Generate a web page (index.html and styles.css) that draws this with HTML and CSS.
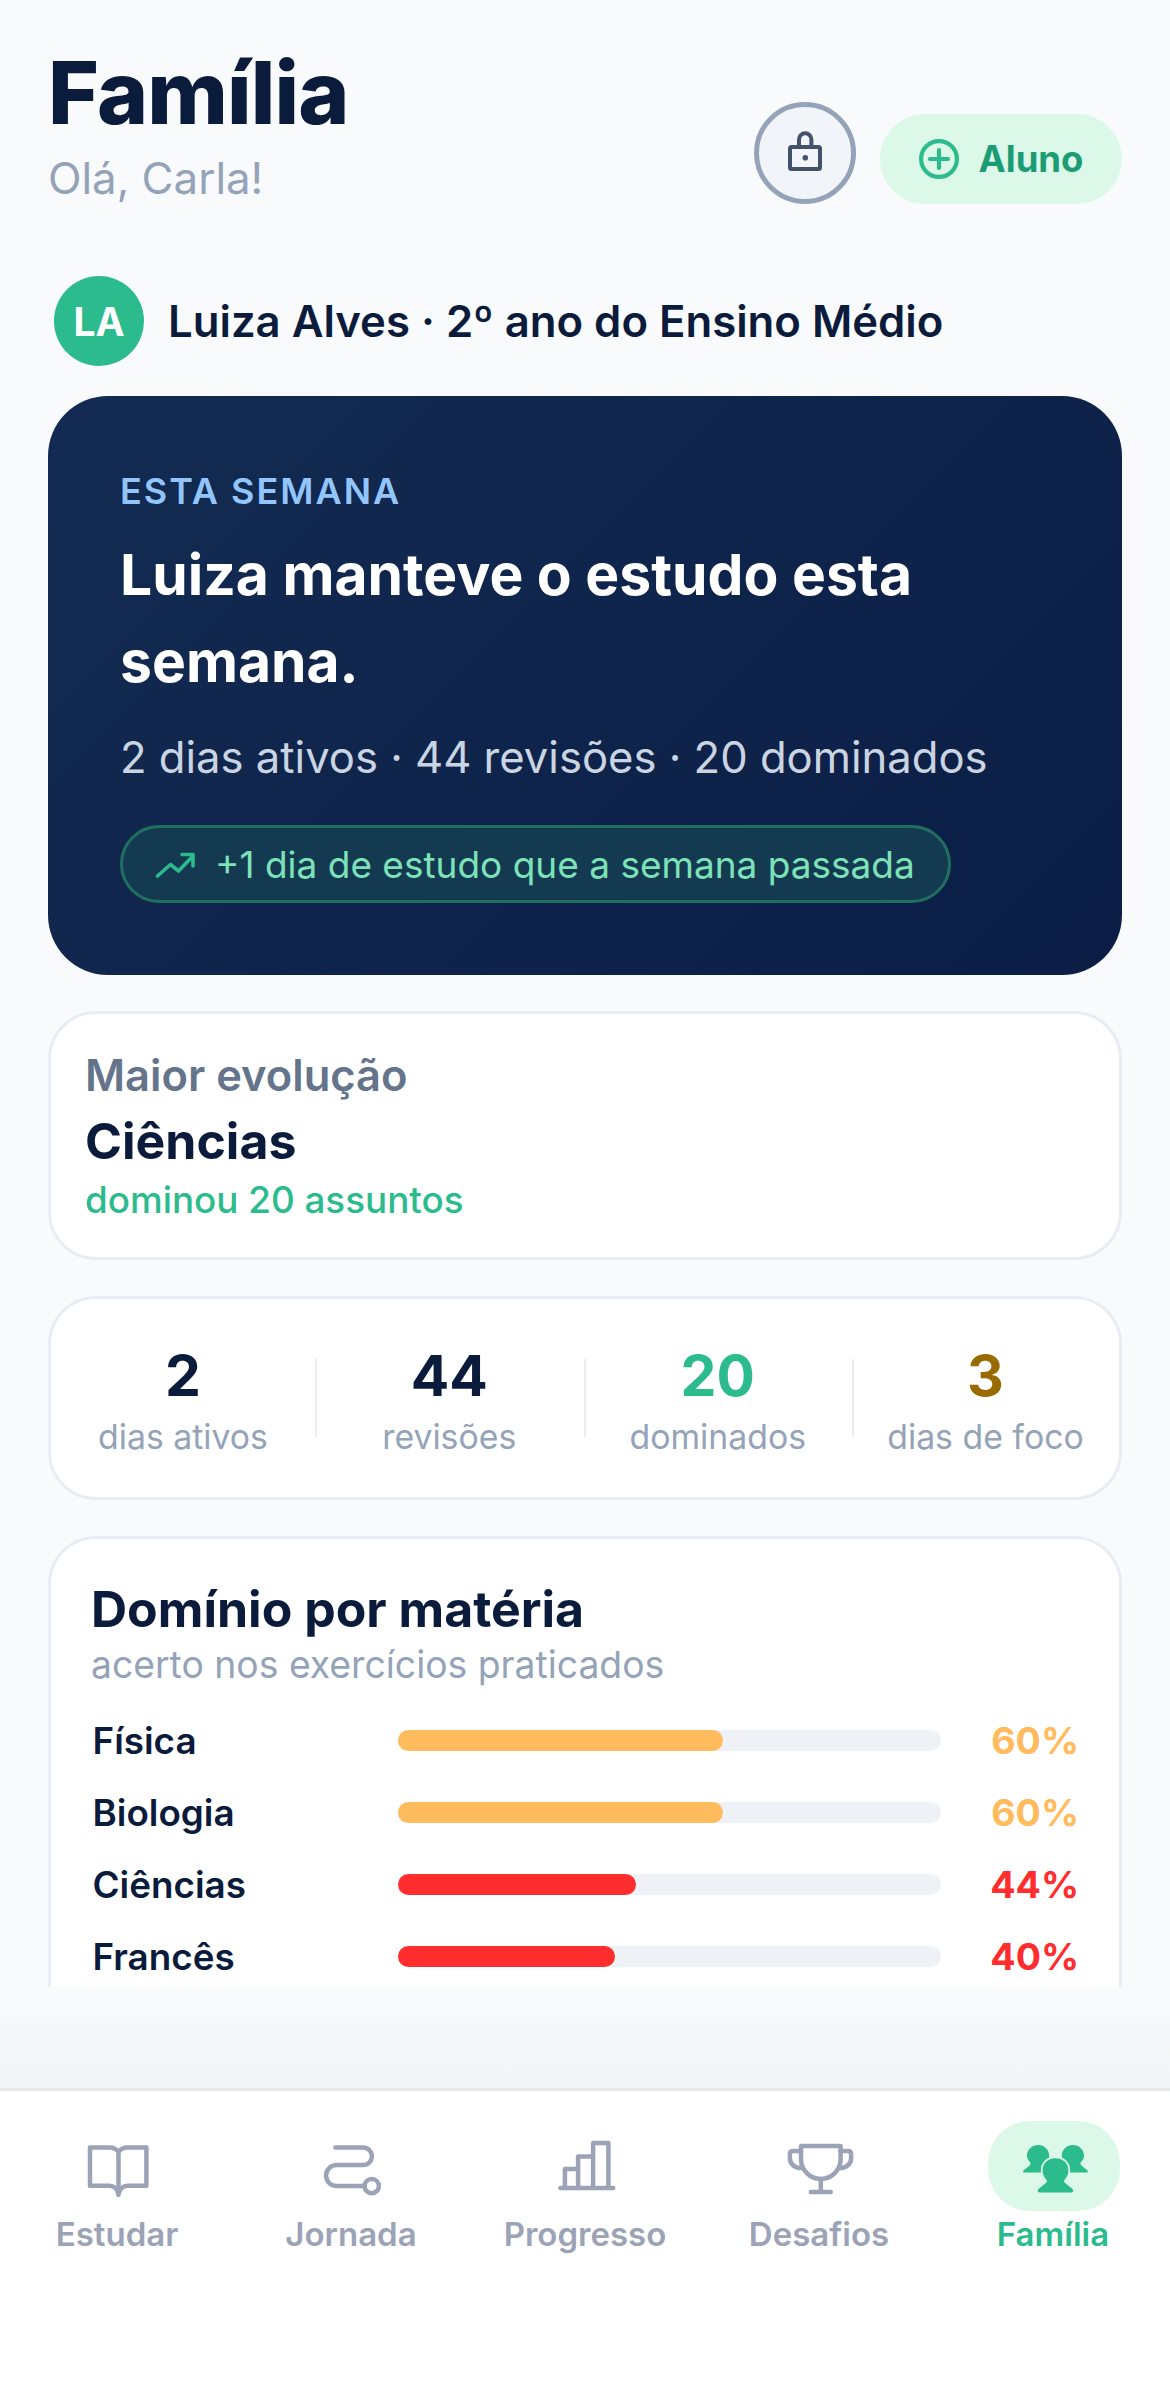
FILE: index.html
```html
<!DOCTYPE html>
<html lang="pt-BR">
<head>
    <meta charset="UTF-8">
    <title>Família</title>
    <link rel="stylesheet" href="styles.css">
</head>
<body>
<div class="app">
    <div class="scroll">
        <header class="top">
            <div class="top-text">
                <h1>Família</h1>
                <p>Olá, Carla!</p>
            </div>
            <div class="top-actions">
                <div class="lock-btn">
                    <svg width="48" height="48" viewBox="0 0 48 48" fill="none" stroke="#42526a" stroke-width="4" stroke-linejoin="round"><rect x="9" y="18" width="30" height="22" rx="1.5"/><path d="M18 17v-6.500a6.200 6.200 0 0 1 12.400 0V17"/><circle cx="24.300" cy="28.700" r="2.800" fill="#42526a" stroke="none"/></svg>
                </div>
                <div class="add-btn">
                    <svg width="40" height="40" viewBox="0 0 40 40" fill="none" stroke="#2bbb8d" stroke-width="4.200" stroke-linecap="round"><circle cx="20" cy="20" r="17.900"/><path d="M20 11v18M11 20h18"/></svg>
                    <span>Aluno</span>
                </div>
            </div>
        </header>

        <div class="student">
            <div class="avatar">LA</div>
            <div class="student-name">Luiza Alves · 2º ano do Ensino Médio</div>
        </div>

        <section class="hero">
            <div class="hero-label">ESTA SEMANA</div>
            <h2>Luiza manteve o estudo esta semana.</h2>
            <p class="hero-sub">2 dias ativos · 44 revisões · 20 dominados</p>
            <div class="hero-pill">
                <svg width="42" height="42" viewBox="0 0 42 42" fill="none" stroke="#2bbb8d" stroke-width="3.600" stroke-linecap="round" stroke-linejoin="round"><path d="M3.500 33l13-11.500 8 6.500L38 14"/><path d="M28 11.500h11V23"/></svg>
                <span>+1 dia de estudo que a semana passada</span>
            </div>
        </section>

        <section class="card best">
            <div class="best-label">Maior evolução</div>
            <div class="best-name">Ciências</div>
            <div class="best-note">dominou 20 assuntos</div>
        </section>

        <section class="card stats">
            <div class="stat"><b>2</b><span>dias ativos</span></div>
            <div class="stat"><b>44</b><span>revisões</span></div>
            <div class="stat"><b class="green">20</b><span>dominados</span></div>
            <div class="stat"><b class="brown">3</b><span>dias de foco</span></div>
        </section>

        <section class="card subjects">
            <h3>Domínio por matéria</h3>
            <p class="subjects-sub">acerto nos exercícios praticados</p>
            <div class="subject">
                <span class="subject-name">Física</span>
                <div class="track"><div class="fill orange" style="width:60%"></div></div>
                <span class="pct orange-text">60%</span>
            </div>
            <div class="subject">
                <span class="subject-name">Biologia</span>
                <div class="track"><div class="fill orange" style="width:60%"></div></div>
                <span class="pct orange-text">60%</span>
            </div>
            <div class="subject">
                <span class="subject-name">Ciências</span>
                <div class="track"><div class="fill red" style="width:44%"></div></div>
                <span class="pct red-text">44%</span>
            </div>
            <div class="subject">
                <span class="subject-name">Francês</span>
                <div class="track"><div class="fill red" style="width:40%"></div></div>
                <span class="pct red-text">40%</span>
            </div>
        </section>
    </div>

    <div class="fade"></div>

    <nav class="tabs">
        <div class="tab">
            <div class="tab-icon">
                <svg width="72" height="72" viewBox="0 0 24 24" fill="none" stroke="#9ca3b6" stroke-width="1.500" stroke-linecap="round" stroke-linejoin="round"><path d="M12.500 21.600V7.400c-.6-1-1.600-1.600-3-1.600H3v12.800h6.500c1.500 0 2.700 1.100 3 3 .3-1.900 1.500-3 3-3h6.300V5.800h-6.300c-1.400 0-2.400.6-3 1.600"/></svg>
            </div>
            <span>Estudar</span>
        </div>
        <div class="tab">
            <div class="tab-icon">
                <svg width="72" height="72" viewBox="0 0 24 24" fill="none" stroke="#9ca3b6" stroke-width="1.500" stroke-linecap="round" stroke-linejoin="round"><path d="M6.800 5.800H16a2.950 2.950 0 0 1 0 5.900H7.200a3.500 3.500 0 0 0 0 7h9.300"/><circle cx="18.900" cy="18.700" r="2.400"/></svg>
            </div>
            <span>Jornada</span>
        </div>
        <div class="tab">
            <div class="tab-icon">
                <svg width="72" height="72" viewBox="0 0 24 24" fill="none" stroke="#9ca3b6" stroke-width="1.500" stroke-linecap="round" stroke-linejoin="round"><path d="M3.800 19.300h17.600M5.300 19.300V13h4.400M9.700 19.300V8.800h5M14.700 19.300V4.300h5.100v15"/></svg>
            </div>
            <span>Progresso</span>
        </div>
        <div class="tab">
            <div class="tab-icon">
                <svg width="72" height="72" viewBox="0 0 24 24" fill="none" stroke="#9ca3b6" stroke-width="1.500" stroke-linecap="round" stroke-linejoin="round"><path d="M6 5.300h13.200v4.400a6.600 6.600 0 0 1-13.200 0z"/><path d="M6 7H3.300q-1 0-1 1v1.400c0 1.900 1.500 3.300 3.800 3.300M19.200 7h2.500q1 0 1 1v1.400c0 1.900-1.500 3.300-3.800 3.300"/><path d="M12.600 16.300v4.400M9.300 20.700h6.600"/></svg>
            </div>
            <span>Desafios</span>
        </div>
        <div class="tab active">
            <div class="tab-icon">
                <svg width="72" height="72" viewBox="0 0 24 24" fill="#2bbb8d">
                    <path d="M6.700 5c2.100 0 3.700 1.600 3.700 3.600 0 1.200-.4 2.200-1 2.900-.4.500-.3 1 .1 1.300l1.500 1.400H2.300c-.6 0-.8-.4-.4-.8L3.700 12c.6-.5.6-.9.300-1.300C3.300 10 3 9.300 3 8.600 3 6.600 4.600 5 6.700 5z"/>
                    <path d="M6.700 5c2.100 0 3.700 1.600 3.700 3.600 0 1.200-.4 2.200-1 2.900-.4.500-.3 1 .1 1.300l1.500 1.400H2.300c-.6 0-.8-.4-.4-.8L3.700 12c.6-.5.6-.9.300-1.300C3.300 10 3 9.300 3 8.600 3 6.600 4.600 5 6.700 5z" transform="translate(25 0) scale(-1 1)"/>
                    <path class="fam-front" d="M12.500 9.400c2.400 0 4.300 1.600 4.300 4 0 1.400-.5 2.300-1.200 3.100-.4.500-.3.900.1 1.200l2.400 1.900c.6.600.3 1.200-.3 1.200H7.200c-.6 0-.9-.6-.3-1.200l2.400-1.900c.4-.3.500-.7.100-1.200-.7-.8-1.200-1.700-1.200-3.100 0-2.400 1.900-4 4.300-4z"/>
                </svg>
            </div>
            <span>Família</span>
        </div>
    </nav>
</div>
</body>
</html>
```
FILE: styles.css
```css
* {
    box-sizing: border-box;
}
html, body {
    margin: 0;
    padding: 0;
}
body {
    background: #f9fafc;
    font-family: Inter, "Liberation Sans", sans-serif;
    color: #0b1b3b;
}
h1, h2, h3, p {
    margin: 0;
}
.app {
    width: 1170px;
    height: 2382px;
    display: flex;
    flex-direction: column;
    overflow: hidden;
}
.scroll {
    height: 1987px;
    flex: none;
    overflow: hidden;
    padding: 0 48px;
}

/* header */
.top {
    display: flex;
    justify-content: space-between;
    padding-top: 42px;
    height: 276px;
}
.top-text h1 {
    font-size: 87px;
    line-height: 102px;
    font-weight: 800;
    letter-spacing: -0.9px;
}
.top-text p {
    font-size: 43.8px;
    line-height: 54px;
    color: #94a3b8;
    margin-top: 8px;
}
.top-actions {
    display: flex;
    align-items: flex-end;
    gap: 24px;
    padding-top: 60px;
    height: 162px;
}
.lock-btn {
    width: 102px;
    height: 102px;
    border-radius: 50%;
    background: #f1f5f9;
    border: 5px solid #94a3b8;
    display: flex;
    align-items: center;
    justify-content: center;
}
.add-btn {
    width: 242px;
    height: 90px;
    border-radius: 45px;
    background: #dcf8e8;
    display: flex;
    align-items: center;
    justify-content: center;
    gap: 20px;
    font-size: 36.5px;
    font-weight: 700;
    color: #1c9c74;
}

/* student */
.student {
    display: flex;
    align-items: center;
    gap: 24px;
    padding-left: 6px;
    height: 90px;
}
.avatar {
    width: 90px;
    height: 90px;
    border-radius: 50%;
    background: #2bbb8d;
    color: #fff;
    font-size: 39px;
    font-weight: 700;
    display: flex;
    align-items: center;
    justify-content: center;
}
.student-name {
    font-size: 43.7px;
    font-weight: 600;
}

/* hero */
.hero {
    margin-top: 30px;
    height: 579px;
    border-radius: 60px;
    background: linear-gradient(135deg, #132b52, #0b1d45);
    padding: 72px 72px 0;
}
.hero-label {
    font-size: 36px;
    line-height: 42px;
    font-weight: 600;
    letter-spacing: 2px;
    color: #93c5fd;
    padding-top: 2px;
}
.hero h2 {
    font-size: 57px;
    line-height: 87px;
    font-weight: 700;
    color: #fff;
    margin-top: 19px;
}
.hero-sub {
    font-size: 43.6px;
    line-height: 54px;
    color: #cbd5e1;
    margin-top: 26px;
}
.hero-pill {
    display: inline-flex;
    align-items: center;
    gap: 19px;
    height: 78px;
    margin-top: 40px;
    padding: 0 33px 0 31px;
    border-radius: 39px;
    border: 3px solid #21705f;
    background: #143a52;
    color: #7ee2b8;
    font-size: 37px;
    font-weight: 400;
}

/* cards */
.card {
    background: #fff;
    border: 3px solid #e9ecf2;
    border-radius: 48px;
    margin-top: 36px;
}
.best {
    height: 249px;
    padding: 34px;
}
.best-label {
    font-size: 43.5px;
    line-height: 54px;
    font-weight: 600;
    color: #64748b;
}
.best-name {
    font-size: 50px;
    line-height: 66px;
    font-weight: 700;
    margin-top: 6px;
}
.best-note {
    font-size: 36.8px;
    line-height: 48px;
    font-weight: 500;
    color: #2bbb8d;
    margin-top: 2px;
}

.stats {
    height: 204px;
    display: grid;
    grid-template-columns: 264px 268.5px 268.5px 267px;
    align-items: center;
}
.stat {
    display: flex;
    flex-direction: column;
    align-items: center;
    border-left: 2px solid #e9ecf2;
    height: 78px;
    justify-content: center;
    padding-right: 2px;
}
.stat:first-child {
    border-left: 0;
    padding-right: 0;
}
.stat:last-child {
    padding-right: 2px;
}
.stat b {
    font-size: 57px;
    line-height: 72px;
    font-weight: 700;
    margin-top: 1.5px;
    margin-bottom: 4.5px;
}
.stat span {
    font-size: 33.8px;
    line-height: 42px;
    color: #94a3b8;
    white-space: nowrap;
}
.green { color: #2bbb8d; }
.brown { color: #996a00; }

.subjects {
    height: 500px;
    padding: 40px 40px 0 41.5px;
}
.subjects h3 {
    font-size: 50px;
    line-height: 60px;
    font-weight: 700;
    margin-left: -1.5px;
}
.subjects-sub {
    font-size: 37.3px;
    line-height: 48px;
    color: #94a3b8;
    margin-top: 2px;
    margin-bottom: 15px;
    margin-left: -1.5px;
}
.subject {
    display: flex;
    align-items: center;
    height: 72px;
}
.subject-name {
    width: 305px;
    flex: none;
    font-size: 36.8px;
    font-weight: 600;
}
.track {
    width: 543px;
    flex: none;
    height: 21px;
    border-radius: 10.5px;
    background: #eef1f6;
}
.fill {
    height: 21px;
    border-radius: 10.5px;
}
.orange { background: #ffbb5c; }
.red { background: #ff2d2d; }
.pct {
    flex: 1;
    text-align: right;
    font-size: 37.5px;
    font-weight: 700;
}
.orange-text { color: #ffbb5c; }
.red-text { color: #ff2d2d; }

/* bottom tabs */
.fade {
    height: 101px;
    flex: none;
    background: linear-gradient(#f9fafc, #f3f4f7);
}
.tabs {
    flex: 1;
    display: grid;
    grid-template-columns: repeat(5, 234px);
    background: #fff;
    border-top: 3px solid #e5e7eb;
    padding-top: 30px;
}
.tab {
    display: flex;
    flex-direction: column;
    align-items: center;
    font-size: 33px;
    font-weight: 600;
    color: #9ca3b6;
}
.tab-icon {
    width: 132px;
    height: 90px;
    border-radius: 42px;
    display: flex;
    align-items: center;
    justify-content: center;
    margin-bottom: 3px;
}
.tab.active {
    color: #2bbb8d;
}
.tab.active .tab-icon {
    background: #dcf8e8;
    margin-left: 1px;
}
.fam-front {
    stroke: #dcf8e8;
    stroke-width: 1.2px;
    paint-order: stroke;
}
```
